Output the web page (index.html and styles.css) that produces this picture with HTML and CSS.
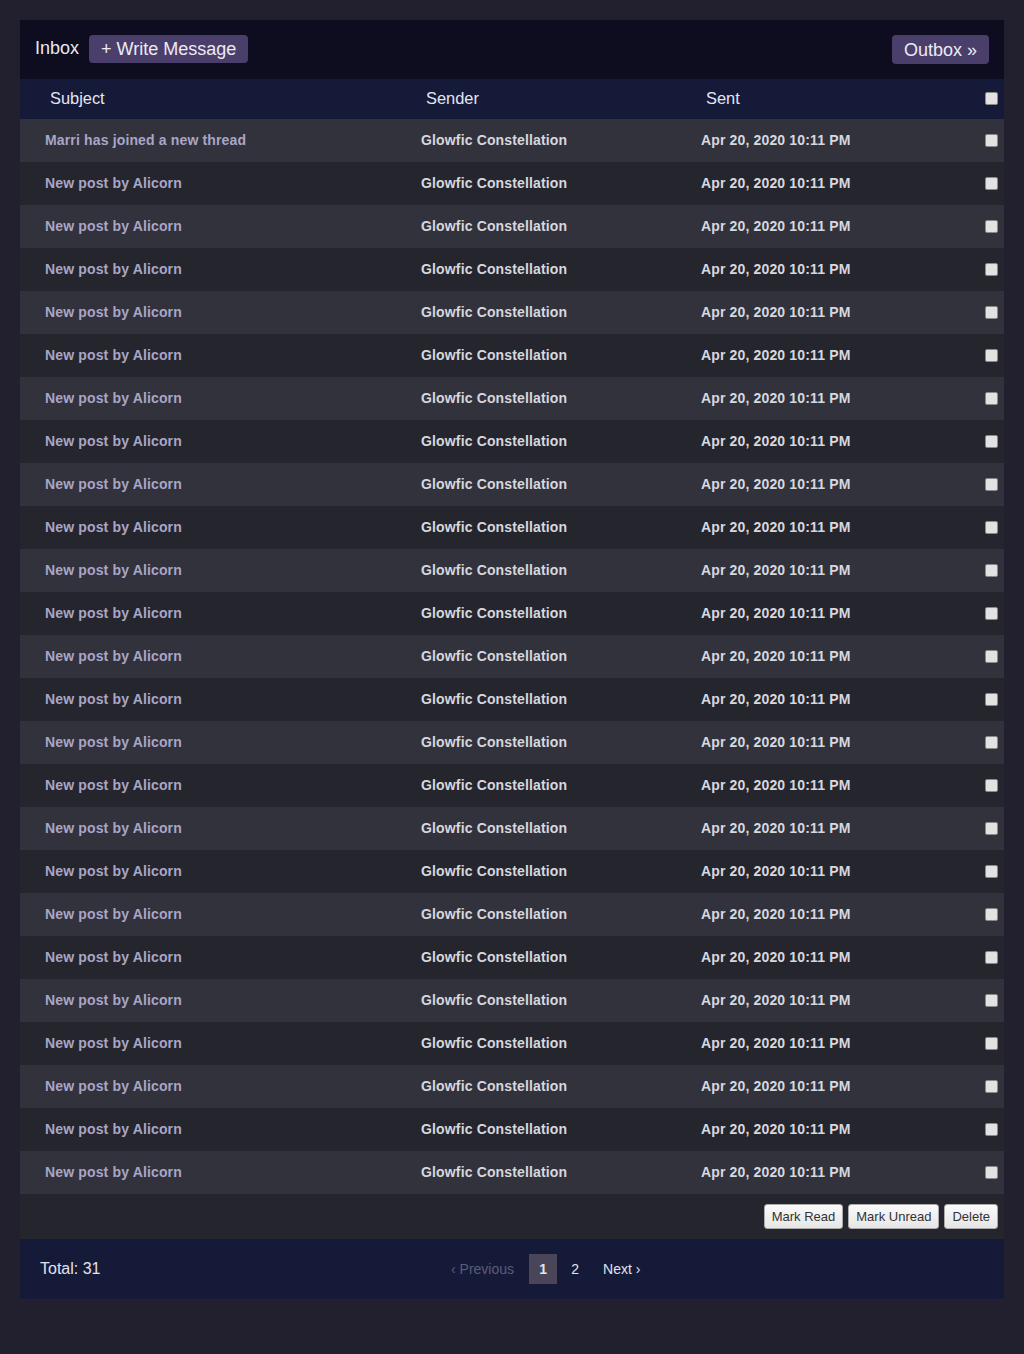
FILE: index.html
```html
<!DOCTYPE html>
<html>
<head>
<meta charset="utf-8">
<link rel="stylesheet" href="styles.css">
</head>
<body>
<div class="box">
  <div class="topbar">
    <div class="topleft">
      <span class="title">Inbox</span>
      <a class="btn-purple">+ Write Message</a>
    </div>
    <a class="btn-purple outbox">Outbox »</a>
  </div>
  <div class="thead row">
    <div class="c-subj">Subject</div>
    <div class="c-send">Sender</div>
    <div class="c-sent">Sent</div>
    <div class="c-chk"><span class="chk"></span></div>
  </div>
  <div id="rows"></div>
  <div class="actions">
    <button class="gbtn">Mark Read</button>
    <button class="gbtn">Mark Unread</button>
    <button class="gbtn">Delete</button>
  </div>
  <div class="footer">
    <div class="total">Total: 31</div>
    <div class="pager">
      <span class="prev">‹ Previous</span>
      <span class="pg cur">1</span>
      <span class="pg">2</span>
      <span class="next">Next ›</span>
    </div>
  </div>
</div>
<script src="app.js"></script>
</body>
</html>
```
FILE: app.js
```js
var rows = document.getElementById('rows');
var html = '';
for (var i = 0; i < 25; i++) {
  var subj = i === 0 ? 'Marri has joined a new thread' : 'New post by Alicorn';
  html += '<div class="row msg ' + (i % 2 === 0 ? 'odd' : 'even') + '">' +
    '<div class="c-subj">' + subj + '</div>' +
    '<div class="c-send">Glowfic Constellation</div>' +
    '<div class="c-sent">Apr 20, 2020 10:11 PM</div>' +
    '<div class="c-chk"><span class="chk"></span></div></div>';
}
rows.innerHTML = html;
```
FILE: styles.css
```css
html, body {
  margin: 0;
  padding: 0;
  background: #221f2e;
  font-family: "Liberation Sans", Arial, sans-serif;
}
body {
  padding: 20px 20px 55px 20px;
}
.box {
  width: 984px;
}
.topbar {
  height: 59px;
  background: #0e0d20;
  display: flex;
  align-items: center;
  justify-content: space-between;
  padding: 0 15px;
  box-sizing: border-box;
}
.topleft {
  display: flex;
  align-items: center;
  gap: 10px;
}
.title {
  color: #e8e8f0;
  font-size: 18px;
  margin-top: -3px;
}
.btn-purple {
  background: #4a3e6b;
  color: #ecebf3;
  font-size: 18px;
  border-radius: 4px;
  height: 28px;
  line-height: 28px;
  padding: 0 12px;
  display: inline-block;
  margin-top: -1px;
}
.outbox {
  height: 29px;
  line-height: 30px;
  padding: 0 12px;
  margin-top: 0;
}
.row {
  display: grid;
  grid-template-columns: 376px 280px 1fr 26px;
  align-items: center;
}
.thead {
  height: 40px;
  background: #161a39;
  color: #e6e6ef;
  font-size: 16.4px;
}
.thead > div { margin-top: -2px; }
.thead .c-subj, .thead .c-send, .thead .c-sent {
  padding-left: 30px;
}
.msg {
  height: 43px;
  font-size: 14px;
  font-weight: bold;
  letter-spacing: 0.15px;
  color: #d7d7de;
}
.msg > div { margin-top: -1px; }
.msg .c-subj, .msg .c-send, .msg .c-sent {
  padding-left: 25px;
}
.msg .c-subj { color: #aaa5c5; }
.odd { background: #32323d; }
.even { background: #25252e; }
.c-chk {
  display: flex;
  justify-content: flex-end;
  align-items: center;
  padding-right: 6px;
}
.chk {
  width: 11px;
  height: 11px;
  border: 1px solid #8a8a8a;
  border-radius: 2px;
  background: #e2e2e2;
  display: inline-block;
}
.actions {
  height: 45px;
  background: #25252e;
  display: flex;
  justify-content: flex-end;
  align-items: center;
  gap: 5px;
  padding-right: 6px;
}
.gbtn {
  font-family: "Liberation Sans", Arial, sans-serif;
  font-size: 13px;
  color: #333;
  height: 25px;
  padding: 0 7px;
  border: 1px solid #aaa;
  border-radius: 3px;
  background: linear-gradient(#fafafa, #e6e6e6);
  margin: 0;
}
.footer {
  height: 60px;
  background: #161a39;
  display: grid;
  grid-template-columns: 411px auto;
  align-items: center;
  padding: 0 20px;
}
.total {
  color: #e3e3ea;
  font-size: 16px;
}
.pager {
  display: flex;
  align-items: center;
  font-size: 14px;
  color: #e3e3ea;
}
.prev {
  color: #5b5a75;
  margin-right: 15px;
}
.pg {
  width: 28px;
  height: 30px;
  line-height: 30px;
  text-align: center;
  margin-right: 4px;
}
.pg.cur {
  background: #4b4559;
  font-weight: bold;
}
.next {
  margin-left: 10px;
}
```
